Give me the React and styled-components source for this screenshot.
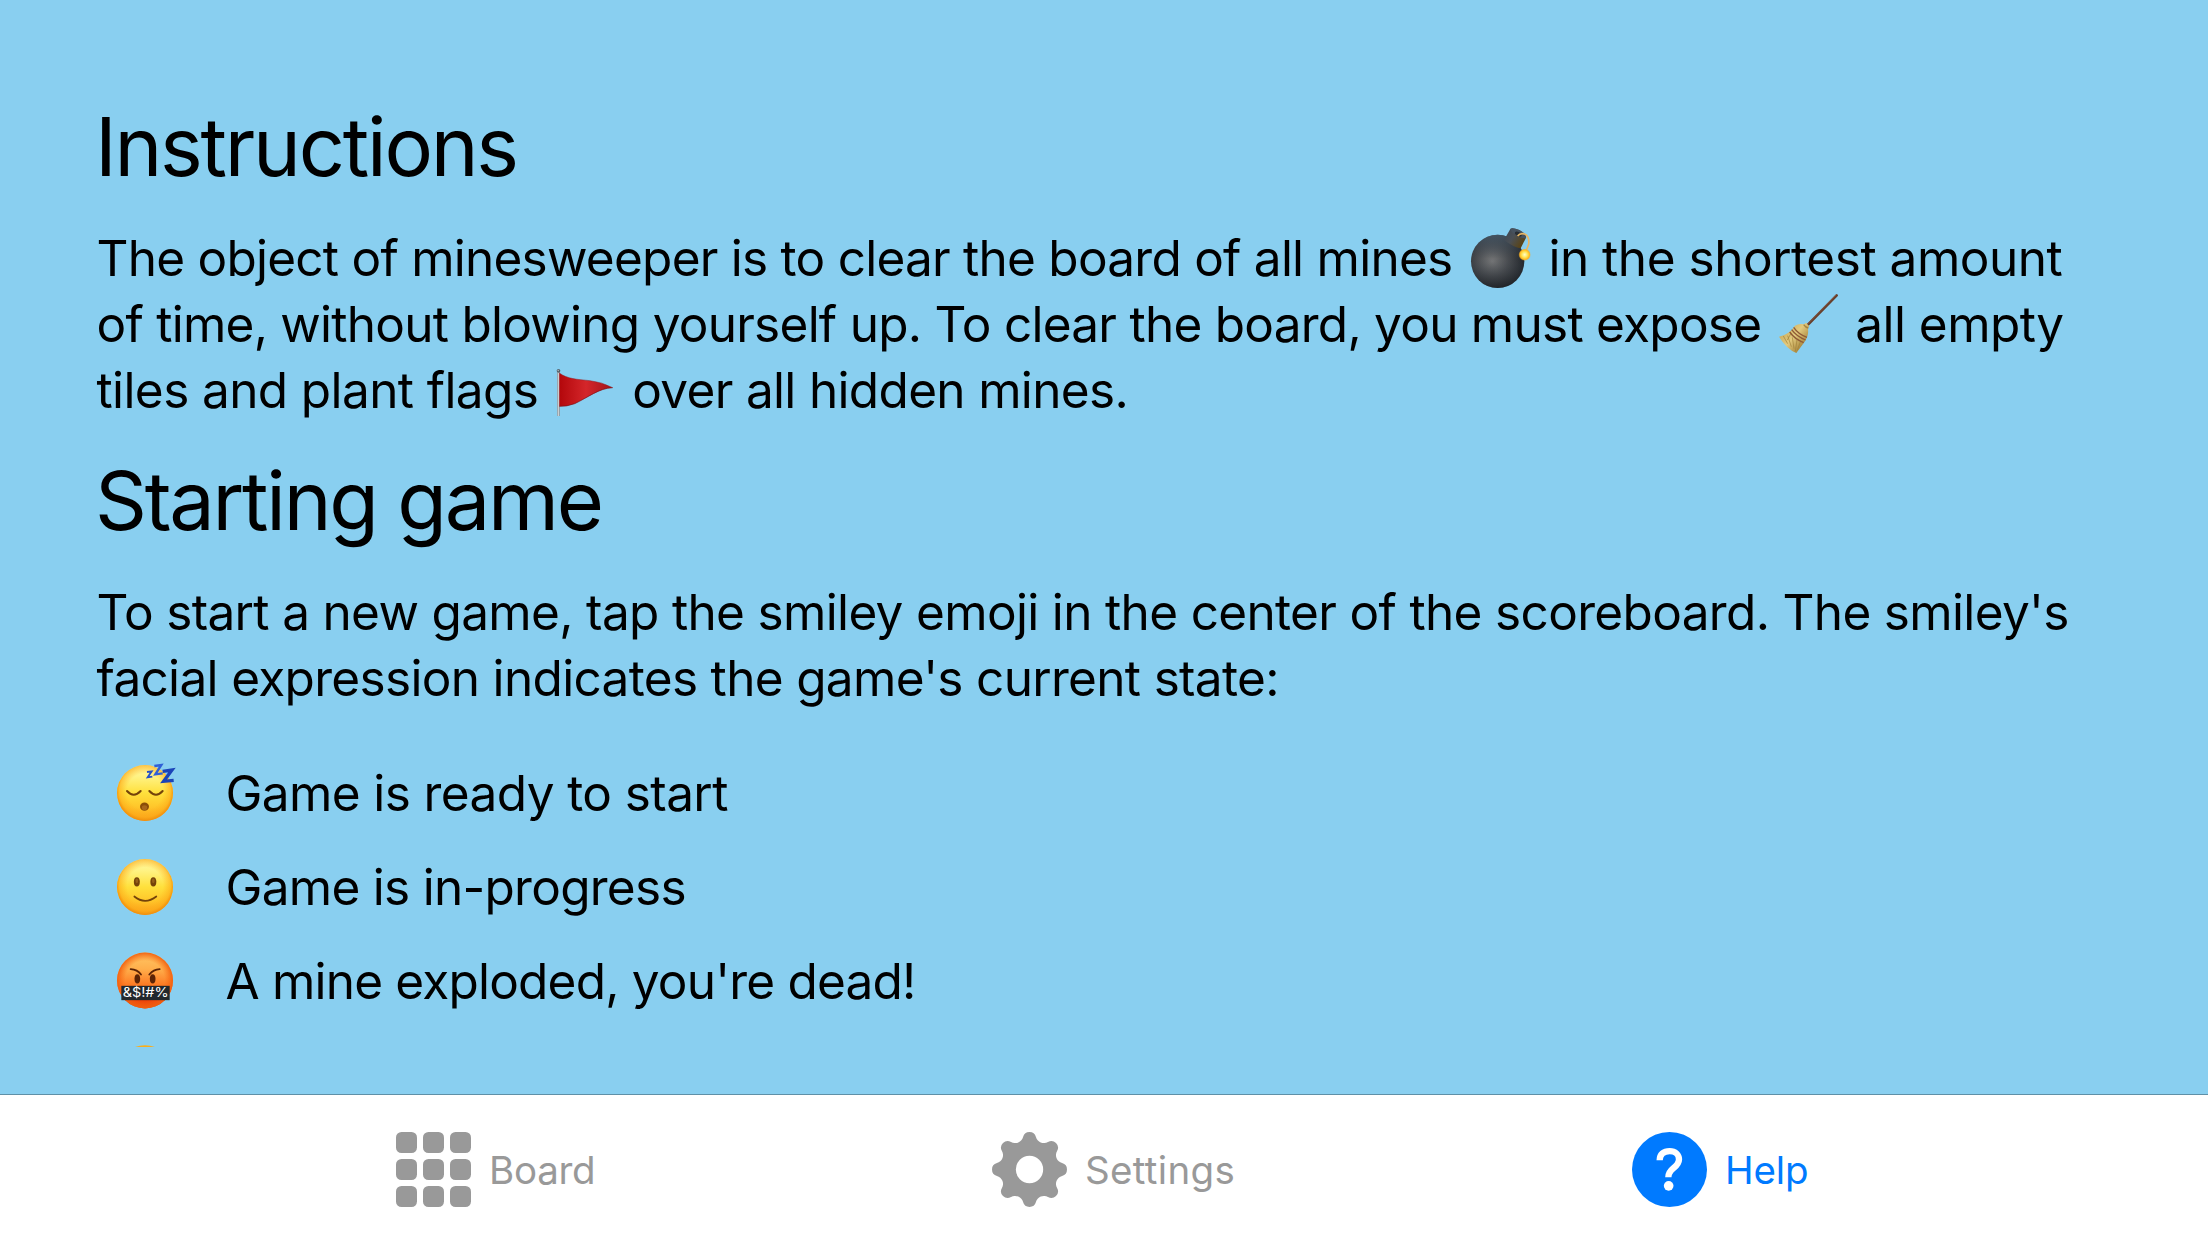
import React from 'react';
import styled, { createGlobalStyle } from 'styled-components';

const Global = createGlobalStyle`
  * { box-sizing: border-box; }
  body {
    margin: 0;
    background: #89cff0;
    color: #000;
    font-family: Inter, "Liberation Sans", sans-serif;
  }
`;

const Screen = styled.div`
  width: 2208px;
  height: 1242px;
  display: flex;
  flex-direction: column;
  overflow: hidden;
  background: #89cff0;
`;

const HelpView = styled.main`
  flex: none;
  height: 1047px;
  margin-bottom: 47px;
  padding: 107px 90px 0 96px;
  overflow: hidden;
`;

const Title = styled.h1`
  margin: 0 0 38px -1px;
  font-size: 81px;
  line-height: 80px;
  font-weight: 400;
  letter-spacing: -2.25px;
  white-space: nowrap;
`;

const Para = styled.p`
  margin: 0 0 ${p => p.$gap}px;
  font-size: 49.5px;
  line-height: 66px;
`;

const Line = styled.span`
  display: flex;
  height: 66px;
  padding-left: 0.5px;
  white-space: pre;
  letter-spacing: ${p => p.$track || -0.72}px;
`;

const Run = styled.span`
  letter-spacing: ${p => p.$track}px;
`;

const InlineEmoji = styled.svg`
  flex: none;
  display: block;
  width: ${p => p.$w}px;
  height: 66px;
`;

const List = styled.ul`
  list-style: none;
  margin: 0;
  padding: 0 0 0 16px;
`;

const Item = styled.li`
  height: 94px;
  display: flex;
  align-items: center;
  gap: 47.5px;
  font-size: 49.5px;
  line-height: 60px;
  letter-spacing: ${p => p.$track || -0.72}px;
`;

const Face = styled.svg`
  display: block;
  width: 66px;
  height: 66px;
`;

const TabBar = styled.nav`
  flex: none;
  height: 148px;
  padding: 37px 0 0 396px;
  border-top: 1px solid #5f90a7;
  background: #fff;
  display: grid;
  grid-template-columns: 596px 640px 1fr;
`;

const Tab = styled.div`
  height: 75px;
  display: flex;
  gap: 18px;
  color: ${p => (p.$active ? '#007aff' : '#999')};
  font-size: 38.5px;
  line-height: 76px;
  letter-spacing: ${p => p.$track || 0}px;
`;

const TabIcon = styled.svg`
  flex: none;
  display: block;
  width: 75px;
  height: 75px;
  fill: currentColor;
`;

function Bomb() {
  return (
    <InlineEmoji $w={96} viewBox="-8 30 288 198" role="img" aria-label="bomb">
      <defs>
        <radialGradient id="bombBody" cx="0.4" cy="0.5" r="0.58">
          <stop offset="0" stopColor="#757677" />
          <stop offset="0.5" stopColor="#4a4d51" />
          <stop offset="1" stopColor="#24282d" />
        </radialGradient>
        <linearGradient id="bombShade" x1="0" y1="0" x2="0" y2="1">
          <stop offset="0" stopColor="#4d6478" stopOpacity="0.65" />
          <stop offset="0.45" stopColor="#3c4650" stopOpacity="0" />
          <stop offset="1" stopColor="#16181b" stopOpacity="0.5" />
        </linearGradient>
        <linearGradient id="bombNeck" x1="0" y1="0" x2="1" y2="0.6">
          <stop offset="0" stopColor="#3a4653" />
          <stop offset="0.5" stopColor="#4a4f55" />
          <stop offset="1" stopColor="#5b4310" />
        </linearGradient>
        <radialGradient id="spark">
          <stop offset="0" stopColor="#fffbd0" />
          <stop offset="0.45" stopColor="#ffe85a" />
          <stop offset="0.8" stopColor="#ffb91f" />
          <stop offset="1" stopColor="#f5a623" stopOpacity="0.3" />
        </radialGradient>
      </defs>
      <circle cx="129" cy="139" r="80" fill="url(#bombBody)" />
      <circle cx="129" cy="139" r="80" fill="url(#bombShade)" />
      <path d="M148 75 L167 42 Q172 36 194 45 Q216 57 214 68 L198 100 Q178 98 148 75Z" fill="url(#bombNeck)" />
      <path d="M167 42 Q172 36 194 45 Q216 57 214 68 Q209 73 190 64 Q168 52 167 42Z" fill="#46525f" />
      <ellipse cx="191" cy="57" rx="11" ry="6" transform="rotate(28 191 57)" fill="#272c32" />
      <path d="M189 63 Q196 53 210 57 Q225 64 222 88 L213 111" fill="none" stroke="#e8b765" strokeWidth="5" />
      <circle cx="210" cy="119" r="18" fill="url(#spark)" />
    </InlineEmoji>
  );
}

function Broom() {
  return (
    <InlineEmoji $w={94} viewBox="-10 18 282 198" role="img" aria-label="broom">
      <defs>
        <linearGradient id="straw" x1="0.1" y1="0.2" x2="0.8" y2="0.8">
          <stop offset="0" stopColor="#c9aa5a" />
          <stop offset="0.5" stopColor="#e2ca7e" />
          <stop offset="1" stopColor="#a58238" />
        </linearGradient>
      </defs>
      <path d="M131 119 L217 31" stroke="#653f2c" strokeWidth="8" strokeLinecap="round" />
      <path d="M130 117 L215 30" stroke="#8a5a44" strokeWidth="2.5" strokeLinecap="round" />
      <path d="M119 118 L125 113 L135 124 L131 130 Q134 152 121 170 L96 204 Q67 192 44 155 Q75 148 92 122 Q104 115 119 118Z" fill="url(#straw)" />
      <g fill="none" stroke="#a08038" strokeWidth="2">
        <path d="M57 153 L70 176 M70 152 L81 185 M84 157 L89 191 M98 164 L93 199 M109 168 L99 196 M80 145 L69 165" />
      </g>
      <g fill="none" stroke="#8f5a36" strokeWidth="4">
        <path d="M88 127 Q101 147 128 157" />
        <path d="M82 134 Q96 154 124 165" />
        <path d="M76 141 Q91 162 118 173" />
      </g>
      <path d="M118 119 Q124 128 132 129" fill="none" stroke="#a58441" strokeWidth="4" />
    </InlineEmoji>
  );
}

function Flag() {
  return (
    <InlineEmoji $w={94} viewBox="-6 6 282 198" role="img" aria-label="red flag">
      <defs>
        <linearGradient id="flagCloth" x1="0" y1="0" x2="1" y2="0">
          <stop offset="0" stopColor="#b3070b" />
          <stop offset="0.5" stopColor="#d4262a" />
          <stop offset="1" stopColor="#a3131a" />
        </linearGradient>
      </defs>
      <rect x="51.5" y="50" width="8" height="133" fill="#8c959b" />
      <rect x="53.5" y="52" width="3" height="131" fill="#d5dadd" />
      <circle cx="55.5" cy="47.5" r="5.5" fill="#53616a" />
      <circle cx="54.5" cy="46.5" r="2" fill="#b9c3c9" />
      <path d="M58 54 C82 72 112 73 150 77 Q186 81 218 98 C178 99 143 128 104 146 Q80 155 58 154Z" fill="url(#flagCloth)" />
      <path d="M58 154 Q80 155 104 146 C143 128 178 99 218 98" fill="none" stroke="#7f1016" strokeWidth="3" opacity="0.7" />
      <path d="M58 54 C82 72 112 73 150 77 Q186 81 218 98" fill="none" stroke="#8c2127" strokeWidth="2.5" opacity="0.6" />
    </InlineEmoji>
  );
}

function FaceDefs() {
  return (
    <defs>
      <linearGradient id="faceFill" x1="0" y1="0" x2="0" y2="1">
        <stop offset="0" stopColor="#fff6a0" />
        <stop offset="0.2" stopColor="#fff385" />
        <stop offset="0.5" stopColor="#ffe03c" />
        <stop offset="0.75" stopColor="#ffc62a" />
        <stop offset="1" stopColor="#fb9c1a" />
      </linearGradient>
      <radialGradient id="faceRim" cx="0.5" cy="0.47" r="0.53">
        <stop offset="0.6" stopColor="#ffb01c" stopOpacity="0" />
        <stop offset="0.86" stopColor="#fcaa18" stopOpacity="0.6" />
        <stop offset="0.94" stopColor="#f59a12" />
        <stop offset="1" stopColor="#ee8d10" />
      </radialGradient>
      <linearGradient id="madFill" x1="0" y1="0" x2="0" y2="1">
        <stop offset="0" stopColor="#ffc765" />
        <stop offset="0.3" stopColor="#ffae4b" />
        <stop offset="0.6" stopColor="#fd7620" />
        <stop offset="0.85" stopColor="#ec3f08" />
        <stop offset="1" stopColor="#e84a08" />
      </linearGradient>
      <radialGradient id="madRim" cx="0.5" cy="0.5" r="0.5">
        <stop offset="0.7" stopColor="#fb6a12" stopOpacity="0" />
        <stop offset="1" stopColor="#ef5f10" stopOpacity="0.95" />
      </radialGradient>
    </defs>
  );
}

function Disc({ cx, cy, mad }) {
  return (
    <>
      <circle cx={cx} cy={cy} r="84" fill={mad ? 'url(#madFill)' : 'url(#faceFill)'} />
      <circle cx={cx} cy={cy} r="84" fill={mad ? 'url(#madRim)' : 'url(#faceRim)'} />
    </>
  );
}

function Sleeping() {
  return (
    <Face viewBox="36 31 198 198" role="img" aria-label="sleeping face">
      <FaceDefs />
      <Disc cx={135} cy={130} />
      <g fill="none" stroke="#74430a" strokeWidth="6" strokeLinecap="round">
        <path d="M81 124 Q101 146 122 124" />
        <path d="M148 124 Q168 146 188 124" />
      </g>
      <ellipse cx="133.500" cy="171" rx="13.500" ry="12.500" fill="#8a4d08" />
      <ellipse cx="133.500" cy="174" rx="8" ry="7" fill="#a8661a" />
      <g fill="none" strokeLinejoin="miter">
        <path d="M141 67 L155 65 L143 83 L157 81" stroke="#2450c8" strokeWidth="5.500" />
        <path d="M163 49 L184 46 L166 74 L188 71" stroke="#3060d6" strokeWidth="7" />
        <path d="M188 65 L216 61 L191 95 L221 92" stroke="#1b44b8" strokeWidth="10" />
      </g>
    </Face>
  );
}

function Smiling() {
  return (
    <Face viewBox="36 26.500 198 198" role="img" aria-label="slightly smiling face">
      <Disc cx={135} cy={125.5} />
      <g fill="#74430a">
        <ellipse cx="110.500" cy="110" rx="9" ry="14" />
        <ellipse cx="160" cy="110" rx="9" ry="14" />
      </g>
      <g fill="#95601a">
        <ellipse cx="110.500" cy="107" rx="4" ry="7" />
        <ellipse cx="160" cy="107" rx="4" ry="7" />
      </g>
      <path d="M103 154 Q135 180 169 154" fill="none" stroke="#74430a" strokeWidth="5" strokeLinecap="round" />
    </Face>
  );
}

function Swearing() {
  return (
    <Face viewBox="35 24.500 198 198" role="img" aria-label="face with symbols on mouth">
      <Disc cx={134} cy={122} mad />
      <g fill="none" stroke="#5c2406" strokeWidth="5.500" strokeLinecap="round">
        <path d="M91 88 Q111 89 122 104" />
        <path d="M178 88 Q159 89 147 104" />
      </g>
      <g fill="#5c2406">
        <ellipse cx="111" cy="117" rx="8.500" ry="14" />
        <ellipse cx="157" cy="117" rx="8.500" ry="14" />
      </g>
      <rect x="63" y="138" width="145" height="43" fill="#22282d" />
      <text x="67" y="173" fontSize="40" fontWeight="400" letterSpacing="0" textLength="138" lengthAdjust="spacingAndGlyphs" fill="#fff">
        {'&$!#%'}
      </text>
    </Face>
  );
}

function Won() {
  return (
    <Face viewBox="36 36.500 198 198" role="img" aria-label="smiling face">
      <circle cx="135" cy="130" r="84" fill="#fbae1a" />
    </Face>
  );
}

const GRID = [0, 27, 54];

function BoardIcon() {
  return (
    <TabIcon viewBox="0 0 75 75" aria-hidden="true">
      {GRID.map(y => GRID.map(x => <rect key={`${x}-${y}`} x={x} y={y} width="21" height="21" rx="5.500" />))}
    </TabIcon>
  );
}

// Eight round teeth joined by concave arcs, traced clockwise from the top.
function gearPath() {
  const point = (x, y, turn) => {
    const c = Math.cos(turn);
    const s = Math.sin(turn);
    return `${(x * c + y * s).toFixed(2)} ${(x * s - y * c).toFixed(2)}`;
  };
  let d = `M${point(-19.3, 97.7, 0)}`;
  for (let k = 0; k < 8; k += 1) {
    const turn = (k * Math.PI) / 4;
    d += ` A20 20 0 0 1 ${point(19.3, 97.7, turn)}`;
    d += ` A24.6 24.6 0 0 0 ${point(-19.3, 97.7, turn + Math.PI / 4)}`;
  }
  return `${d}Z M41 0 A41 41 0 1 0 -41 0 A41 41 0 1 0 41 0Z`;
}

function GearIcon() {
  return (
    <TabIcon viewBox="-112.500 -112.500 225 225" aria-hidden="true">
      <path d={gearPath()} fillRule="evenodd" />
    </TabIcon>
  );
}

function HelpIcon() {
  return (
    <TabIcon viewBox="66 156 225 225" aria-hidden="true">
      <circle cx="178.500" cy="268.500" r="112.500" />
      <path
        d="M149 241 C149 223 161 213.500 179 213.500 C196 213.500 207 224 207 238 C207 251 199 258 190 265 C180 273 175 279 175 292"
        fill="none"
        stroke="#fff"
        strokeWidth="19"
      />
      <circle cx="176" cy="317.500" r="14.500" fill="#fff" />
    </TabIcon>
  );
}

export default function App() {
  return (
    <Screen>
      <Global />
      <HelpView>
        <Title>Instructions</Title>
        <Para $gap={38}>
          <Line $track={-0.75}>
            <span>The object of minesweeper is to clear the board of all mines</span>
            <Bomb />
            <Run $track={-0.47}>in the shortest amount</Run>
          </Line>
          <Line $track={-0.74}>
            <span>of time, without blowing yourself up. To clear the board, you must expose</span>
            <Broom />
            <Run $track={-0.55}>all empty</Run>
          </Line>
          <Line $track={-0.6}>
            <span>tiles and plant flags</span>
            <Flag />
            <Run $track={-0.67}>over all hidden mines.</Run>
          </Line>
        </Para>
        <Title>Starting game</Title>
        <Para $gap={35}>
          <Line $track={-0.66}>To start a new game, tap the smiley emoji in the center of the scoreboard. The smiley's</Line>
          <Line $track={-0.67}>facial expression indicates the game's current state:</Line>
        </Para>
        <List>
          <Item $track={-0.6}><Sleeping />Game is ready to start</Item>
          <Item $track={-0.72}><Smiling />Game is in-progress</Item>
          <Item $track={-0.8}><Swearing />A mine exploded, you're dead!</Item>
          <Item><Won /></Item>
        </List>
      </HelpView>
      <TabBar>
        <Tab $track={-0.25}><BoardIcon />Board</Tab>
        <Tab $track={0.35}><GearIcon />Settings</Tab>
        <Tab $active $track={-0.1}><HelpIcon />Help</Tab>
      </TabBar>
    </Screen>
  );
}
